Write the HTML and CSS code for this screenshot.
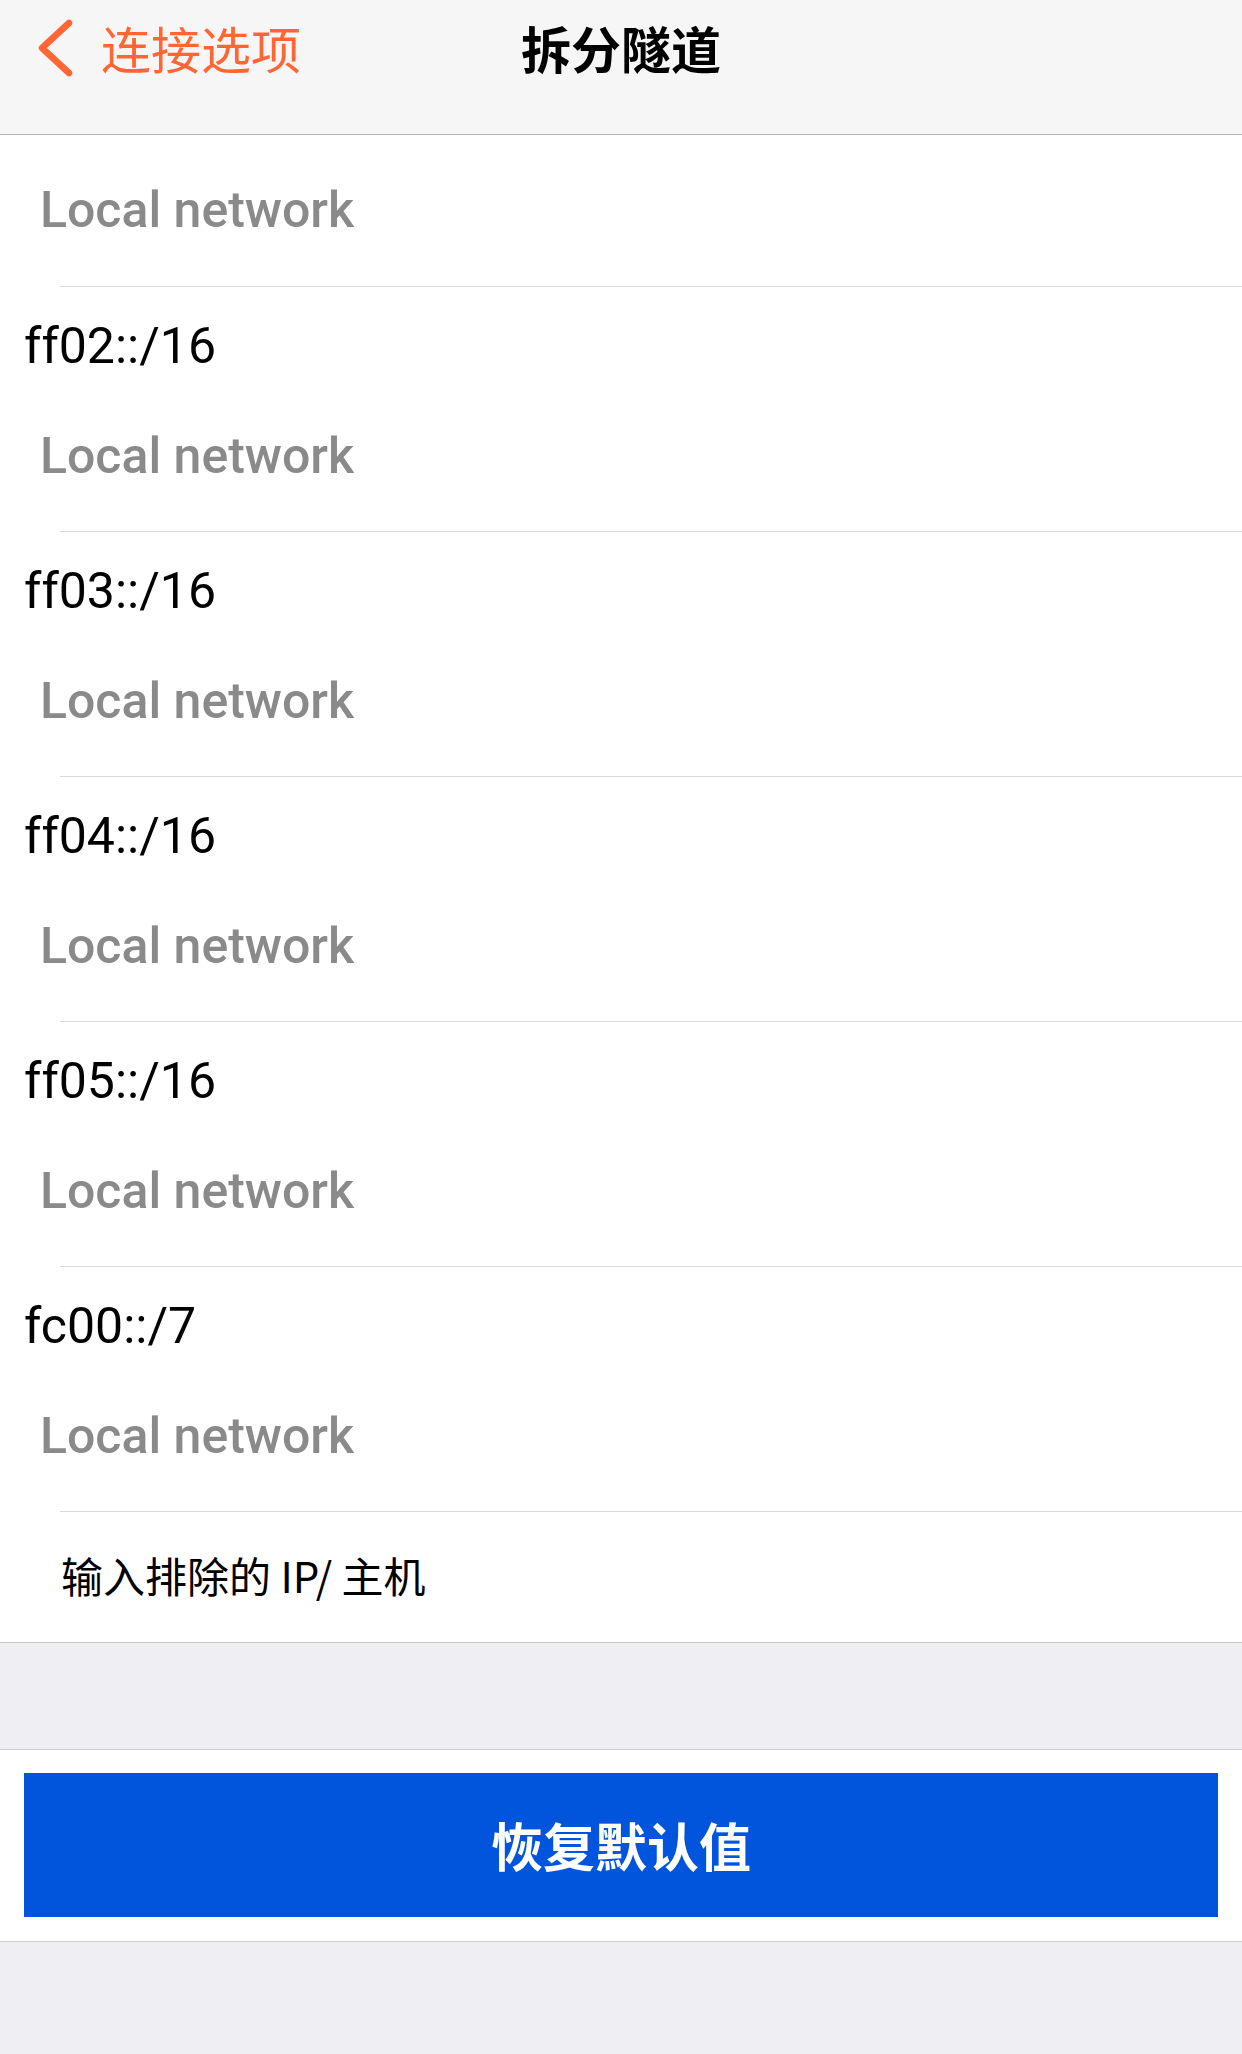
FILE: index.html
```html
<!DOCTYPE html>
<html lang="zh-CN">
<head>
<meta charset="utf-8">
<title>拆分隧道</title>
<link rel="stylesheet" href="styles.css">
</head>
<body>
<div class="page">
  <header class="nav">
    <div class="nav-back">
      <svg class="chevron" width="40" height="60" viewBox="0 0 40 60" aria-hidden="true">
        <polyline points="33,4 6,29 33,54" fill="none" stroke="#ff6633" stroke-width="6.5" stroke-linecap="round" stroke-linejoin="round"/>
      </svg>
      <span class="back-label">连接选项</span>
    </div>
    <div class="nav-title">拆分隧道</div>
    <div class="nav-right"></div>
  </header>

  <section class="list">
    <div class="row row-partial">
      <div class="sub">Local network</div>
    </div>
    <div class="sep"></div>

    <div class="row">
      <div class="title">ff02::/16</div>
      <div class="sub">Local network</div>
    </div>
    <div class="sep"></div>

    <div class="row">
      <div class="title">ff03::/16</div>
      <div class="sub">Local network</div>
    </div>
    <div class="sep"></div>

    <div class="row">
      <div class="title">ff04::/16</div>
      <div class="sub">Local network</div>
    </div>
    <div class="sep"></div>

    <div class="row">
      <div class="title">ff05::/16</div>
      <div class="sub">Local network</div>
    </div>
    <div class="sep"></div>

    <div class="row">
      <div class="title">fc00::/7</div>
      <div class="sub">Local network</div>
    </div>
    <div class="sep"></div>

    <div class="input-row">输入排除的 IP/ 主机</div>
  </section>

  <div class="gap"></div>

  <section class="button-section">
    <button class="reset-btn" type="button">恢复默认值</button>
  </section>
</div>
</body>
</html>
```

FILE: styles.css
```css
html, body {
  margin: 0;
  padding: 0;
}

body {
  background: #eeeef3;
  width: 1242px;
  min-height: 2054px;
  font-family: Roboto, "Noto Sans CJK SC", sans-serif;
}

.page {
  display: flex;
  flex-direction: column;
}

.nav {
  box-sizing: border-box;
  height: 135px;
  border-bottom: 1px solid #b4b4b4;
  background: #f6f6f6;
  display: grid;
  grid-template-columns: 1fr auto 1fr;
  align-items: start;
  padding-top: 17px;
}

.nav-back {
  display: flex;
  align-items: center;
  padding-left: 36px;
  height: 60px;
}

.chevron {
  display: block;
  margin-top: 4px;
}

.back-label {
  margin-left: 25px;
  font-family: "Noto Sans CJK SC", sans-serif;
  font-size: 50px;
  line-height: 60px;
  color: #ff6633;
}

.nav-title {
  font-family: "Noto Sans CJK SC", sans-serif;
  font-weight: 700;
  font-size: 50px;
  line-height: 60px;
  color: #000;
}

.list {
  background: #fff;
  border-bottom: 1px solid #c8c7cc;
}

.row {
  display: flex;
  flex-direction: column;
  padding: 29px 0 45px 0;
}

.row-partial {
  padding: 45px 0 46px 0;
}

.title {
  font-family: Roboto, sans-serif;
  font-size: 50px;
  line-height: 60px;
  color: #000;
  padding-left: 24px;
}

.sub {
  font-family: Roboto, sans-serif;
  font-weight: 500;
  font-size: 50px;
  line-height: 60px;
  color: #8a8a8a;
  padding-left: 40px;
}

.row .title + .sub {
  margin-top: 50px;
}

.sep {
  height: 1px;
  background: #d9d9dc;
  margin-left: 60px;
}

.input-row {
  height: 130px;
  box-sizing: border-box;
  padding: 33px 0 0 61px;
  font-family: "Noto Sans CJK SC", sans-serif;
  font-size: 42px;
  line-height: 60px;
  color: #000;
}

.gap {
  height: 106px;
}

.button-section {
  background: #fff;
  border-top: 1px solid #d0d0d4;
  border-bottom: 1px solid #d0d0d4;
  padding: 23px 24px 24px 24px;
}

.reset-btn {
  display: block;
  width: 100%;
  height: 144px;
  border: 0;
  margin: 0;
  background: #0055dc;
  color: #fff;
  font-family: "Noto Sans CJK SC", sans-serif;
  font-weight: 700;
  font-size: 52px;
  line-height: 60px;
  padding: 0;
  cursor: pointer;
}
```
